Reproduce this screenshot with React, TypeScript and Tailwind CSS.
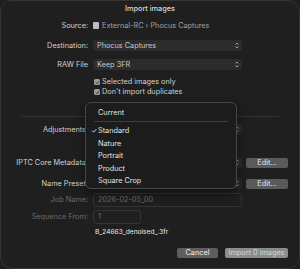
import React from 'react';

const font = { fontFamily: 'Inter, "Liberation Sans", sans-serif' };

const Updown = () => (
  <svg width="4" height="7" viewBox="0 0 4 7" className="shrink-0">
    <path d="M0.5 2.5 L2 1 L3.5 2.5" stroke="#bdbdbd" strokeWidth="0.8" fill="none" />
    <path d="M0.5 4.5 L2 6 L3.5 4.5" stroke="#bdbdbd" strokeWidth="0.8" fill="none" />
  </svg>
);

const Label = ({ children, dim }: { children: React.ReactNode; dim?: boolean }) => (
  <div
    className={`w-[92px] shrink-0 pr-[5px] text-right whitespace-nowrap ${dim ? 'text-[#6b6b6b]' : 'text-[#d2d2d2]'}`}
  >
    {children}
  </div>
);

const Select = ({ value }: { value?: string }) => (
  <div className="w-[149px] h-[11px] rounded-[3px] bg-[#2c2c2c] flex items-center justify-between pl-[4px] pr-[3px] text-[#c9c9c9]">
    <span>{value}</span>
    <Updown />
  </div>
);

const Check = () => (
  <div className="w-[6px] h-[6px] rounded-[1.5px] bg-[#9a9a9a] flex items-center justify-center">
    <svg width="5" height="5" viewBox="0 0 5 5">
      <path d="M1 2.6 L2 3.6 L4 1.2" stroke="#1f1f1f" strokeWidth="0.9" fill="none" />
    </svg>
  </div>
);

const EditButton = () => (
  <div className="ml-[4px] w-[42px] h-[10px] rounded-[2px] bg-[#5a5a5a] text-[#e8e8e8] flex items-center justify-center">
    Edit...
  </div>
);

const MenuItem = ({ label, checked }: { label: string; checked?: boolean }) => (
  <div className="h-[12.5px] flex items-center relative pl-[12px] text-[#e2e2e2]">
    {checked && <span className="absolute left-[5px] text-[7px]">✓</span>}
    {label}
  </div>
);

export default function App() {
  return (
    <div className="w-[300px] h-[269px] bg-[#18211a] text-[7.3px] leading-none" style={font}>
      <div className="relative w-full h-full rounded-[12px] bg-[#1f1f1f] border border-[#353535] flex flex-col">
        <div className="h-[15px] flex items-center justify-center text-[#d9d9d9] font-medium">Import images</div>

        <div className="mt-[4px] h-[12px] flex items-center">
          <Label>Source:</Label>
          <div className="flex items-center gap-[3px] text-[#a0a0a0]">
            <div className="w-[6px] h-[7px] rounded-[1px] bg-[#bdbdbd]" />
            <span>External-RC › Phocus Captures</span>
          </div>
        </div>

        <div className="mt-[8px] flex items-center">
          <Label>Destination:</Label>
          <Select value="Phocus Captures" />
        </div>

        <div className="mt-[8px] flex items-center">
          <Label>RAW File</Label>
          <Select value="Keep 3FR" />
        </div>

        <div className="mt-[7px] h-[10px] flex items-center pl-[93px] gap-[2px] text-[#d2d2d2]">
          <Check />
          <span>Selected images only</span>
        </div>
        <div className="h-[10px] flex items-center pl-[93px] gap-[2px] text-[#d2d2d2]">
          <Check />
          <span>Don't import duplicates</span>
        </div>

        <div className="mt-[19px] mx-[20px] h-px bg-[#333333]" />

        <div className="mt-[7px] flex items-center">
          <Label>Adjustments:</Label>
          <Select />
        </div>

        <div className="mt-[22px] flex items-center">
          <Label>IPTC Core Metadata:</Label>
          <Select />
          <EditButton />
        </div>

        <div className="mt-[10px] flex items-center">
          <Label>Name Preset:</Label>
          <Select />
          <EditButton />
        </div>

        <div className="mt-[4px] flex items-center">
          <Label dim>Job Name:</Label>
          <div className="w-[149px] h-[14px] rounded-[3px] border border-[#343434] flex items-center pl-[4px] text-[#6e6e6e]">
            2026-02-05_00
          </div>
        </div>

        <div className="mt-[3px] flex items-center">
          <Label dim>Sequence From:</Label>
          <div className="w-[48px] h-[14px] rounded-[3px] border border-[#343434] flex items-center pl-[4px] text-[#6e6e6e]">
            1
          </div>
        </div>

        <div className="mt-[4px] h-[8px] flex items-center pl-[94px] text-[6.6px] text-[#ececec]">
          B_24663_denoised_.3fr
        </div>

        <div className="mt-[12px] flex justify-end pr-[11px] gap-[7px]">
          <div className="w-[41px] h-[10px] rounded-[2px] bg-[#5e5e5e] text-[#f0f0f0] flex items-center justify-center">
            Cancel
          </div>
          <div className="w-[63px] h-[10px] rounded-[2px] bg-[#8c8c8c] text-[#d6d6d6] flex items-center justify-center">
            Import 0 images
          </div>
        </div>

        <div className="absolute left-[84px] top-[101px] w-[152px] h-[87px] rounded-[6px] bg-[#1c1c1c] border border-[#474747] shadow-[0_4px_12px_rgba(0,0,0,0.5)] pt-[3px]">
          <MenuItem label="Current" />
          <div className="my-[2.5px] mx-[8px] h-px bg-[#3d3d3d]" />
          <MenuItem label="Standard" checked />
          <MenuItem label="Nature" />
          <MenuItem label="Portrait" />
          <MenuItem label="Product" />
          <MenuItem label="Square Crop" />
        </div>
      </div>
    </div>
  );
}
